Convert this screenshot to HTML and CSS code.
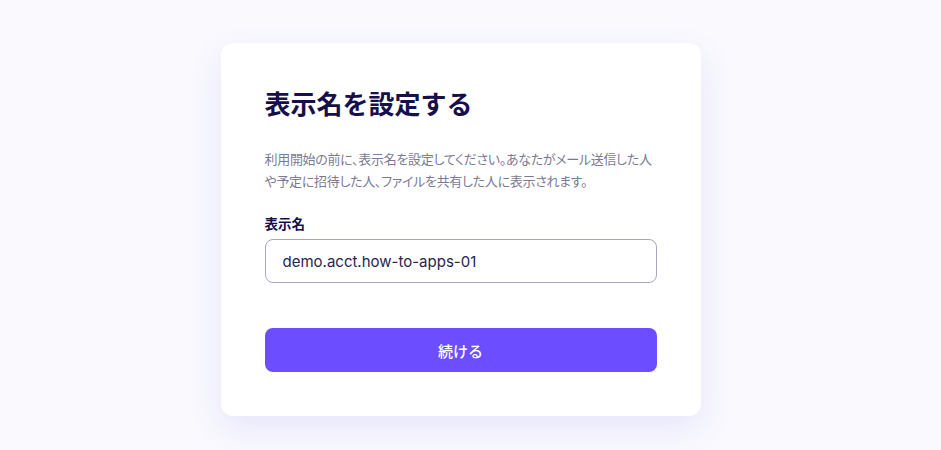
FILE: index.html
```html
<!DOCTYPE html>
<html lang="ja">

<head>
    <meta charset="UTF-8">
    <meta name="viewport" content="width=device-width, initial-scale=1.0">
    <title>表示名を設定する</title>
    <link rel="stylesheet" href="styles.css">
</head>

<body>
    <div class="page">
        <form class="card" onsubmit="return false;">
            <h1 class="card-title">表示名を設定する</h1>
            <p class="card-desc">利用開始の前に、表示名を設定してください。あなたがメール送信した人や予定に招待した人、ファイルを共有した人に表示されます。</p>

            <label class="field-label" for="displayName">表示名</label>
            <input class="field-input" id="displayName" type="text" value="demo.acct.how-to-apps-01" />

            <button class="submit-btn" type="submit">続ける</button>
        </form>
    </div>
</body>

</html>
```

FILE: styles.css
```css
* {
    box-sizing: border-box;
}

body {
    margin: 0;
    font-family: Inter, "Noto Sans CJK JP", sans-serif;
    background-color: #f9f9fe;
    color: #1a1245;
}

.page {
    display: flex;
    justify-content: center;
    align-items: flex-start;
    padding: 43px 20px 0 0;
    min-height: 450px;
}

.card {
    width: 480px;
    padding: 44px;
    background-color: #fff;
    border-radius: 12px;
    box-shadow: 0 12px 32px rgba(108, 90, 230, 0.12);
    display: flex;
    flex-direction: column;
}

.card-title {
    margin: 0;
    font-size: 26px;
    line-height: 36px;
    font-weight: 700;
    color: #160f4a;
}

.card-desc {
    margin: 25px 0 0;
    font-size: 13px;
    line-height: 22px;
    letter-spacing: -0.3px;
    font-feature-settings: "palt";
    color: #7c7a92;
}

.field-label {
    margin-top: 22px;
    font-size: 13.5px;
    line-height: 20px;
    font-weight: 700;
    color: #160f4a;
}

.field-input {
    flex-shrink: 0;
    margin-top: 5px;
    width: 100%;
    height: 44px;
    padding: 0 17px;
    border: 1px solid #a9a6c0;
    border-radius: 8px;
    font-family: inherit;
    font-size: 15px;
    color: #2a2350;
    outline: none;
}

.submit-btn {
    flex-shrink: 0;
    margin-top: 45px;
    width: 100%;
    height: 44px;
    border: none;
    border-radius: 8px;
    background-color: #6c4dff;
    color: #fff;
    font-family: inherit;
    font-size: 15px;
    font-weight: 500;
}
```
